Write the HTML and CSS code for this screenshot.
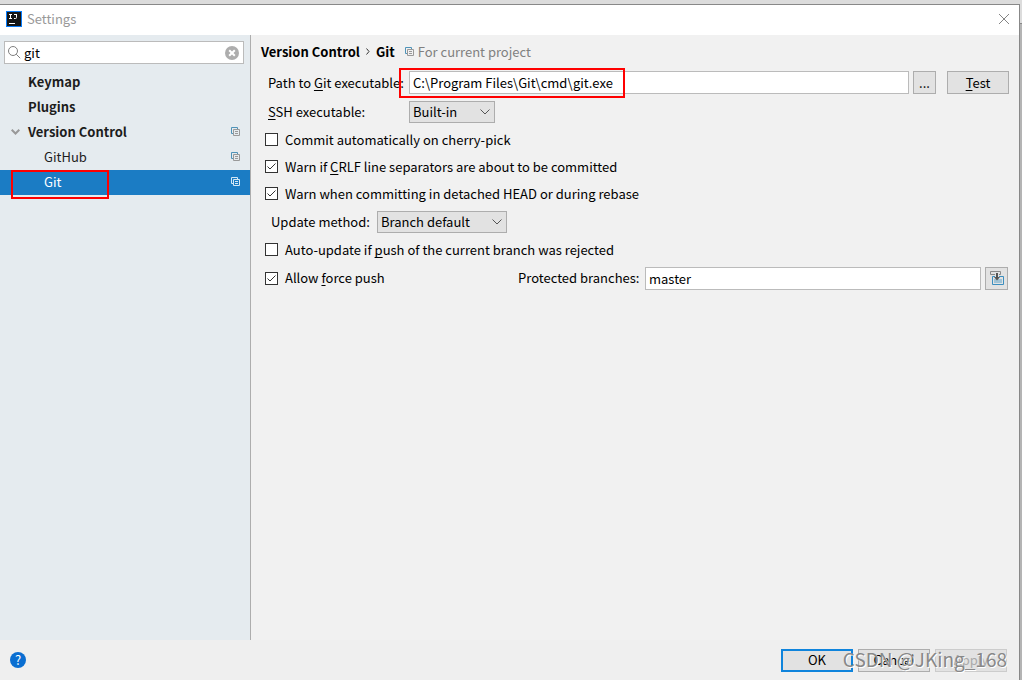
FILE: index.html
```
<!DOCTYPE html>
<html lang="en">
    <head>
        <meta charset="utf-8">
        <title>Settings</title>
        <link rel="stylesheet" href="styles.css">
    </head>
    <body>
        <svg class="defs" width="0" height="0">
            <symbol id="project" viewBox="0 0 9 9">
                <path class="back" d="M2 6.5H.5v-6h6V2"/>
                <path class="front" d="M2.5 2.5h6v6h-6zM4 4.5h3M4 6.5h3"/>
            </symbol>
        </svg>
        <div class="window">
            <header class="titleBar">
                <svg class="logo" width="16" height="16" viewBox="0 0 16 16">
                    <path fill="#087cfa" d="M0 0h16v16H0z"/>
                    <path fill="#151515" d="M1 1h14v14H1z"/>
                    <path fill="none" stroke="#fff" d="M3 3.5h3M4.5 3v5M3 7.5h3M8 3.5h3M10.5 3v3.5q0 1-1 1H8"/>
                    <path fill="#fff" d="M3 12h6v1H3z"/>
                </svg>
                <span class="title">Settings</span>
                <button class="close" aria-label="Close">
                    <svg width="12" height="12" viewBox="0 0 12 12"><path fill="none" stroke="#858585" d="M1 1l10 10M11 1L1 11"/></svg>
                </button>
            </header>

            <div class="main">
                <aside class="sidebar">
                    <div class="search">
                        <svg width="13" height="13" viewBox="0 0 13 13"><path fill="none" stroke="#7f7f7f" d="M9.5 5a4.5 4.5 0 1 1-9 0a4.5 4.5 0 1 1 9 0M8.2 8.2l4 4"/></svg>
                        <input type="text" value="git" aria-label="Search settings">
                        <button class="clear" aria-label="Clear">
                            <svg width="14" height="14" viewBox="0 0 14 14"><circle cx="7" cy="7" r="7" fill="#adadad"/><path stroke="#fff" stroke-width="2" d="M4.2 4.2l5.6 5.6M9.8 4.2L4.2 9.8"/></svg>
                        </button>
                    </div>
                    <nav class="tree">
                        <a class="item group" href="#">Keymap</a>
                        <a class="item group" href="#">Plugins</a>
                        <a class="item group" href="#">
                            <svg class="arrow" width="9" height="6" viewBox="0 0 9 6"><path fill="none" stroke="#999" stroke-width="2" d="M.7.7l3.8 3.8L8.3.7"/></svg>
                            Version Control
                            <svg class="project" width="9" height="9"><use href="#project"/></svg>
                        </a>
                        <a class="item child" href="#">GitHub<svg class="project" width="9" height="9"><use href="#project"/></svg></a>
                        <a class="item child selected" href="#">Git<svg class="project" width="9" height="9"><use href="#project"/></svg><span class="mark markTree"></span></a>
                    </nav>
                </aside>

                <form class="content">
                    <h1 class="path">
                        Version Control
                        <svg width="4" height="7" viewBox="0 0 4 7"><path fill="none" stroke="#333" d="M.5.5l2.5 3l-2.5 3"/></svg>
                        Git
                        <small><svg class="project" width="9" height="9"><use href="#project"/></svg>For current project</small>
                    </h1>
                    <div class="row">
                        <label class="name" for="git">Path to <u>G</u>it executable:</label>
                        <div class="field">
                            <input class="text" type="text" id="git" value="C:\Program Files\Git\cmd\git.exe">
                            <span class="mark markPath"></span>
                        </div>
                        <button class="button small" type="button">...</button>
                        <button class="button test" type="button"><span><u>T</u>est</span></button>
                    </div>
                    <div class="row">
                        <label class="name" for="ssh"><u>S</u>SH executable:</label>
                        <select id="ssh" class="ssh"><option>Built-in</option></select>
                    </div>
                    <div class="row check">
                        <input type="checkbox" id="cherry">
                        <label for="cherry">Commit automatically on cherry-pick</label>
                    </div>
                    <div class="row check">
                        <input type="checkbox" id="crlf" checked>
                        <label for="crlf">Warn if <u>C</u>RLF line separators are about to be committed</label>
                    </div>
                    <div class="row check">
                        <input type="checkbox" id="head" checked>
                        <label for="head">Warn when committing in detached HEAD or during rebase</label>
                    </div>
                    <div class="row update">
                        <label class="methodName" for="method">Update method:</label>
                        <select id="method" class="method"><option>Branch default</option></select>
                    </div>
                    <div class="row check">
                        <input type="checkbox" id="auto">
                        <label for="auto">Auto-update if <u>p</u>ush of the current branch was rejected</label>
                    </div>
                    <div class="row check tall">
                        <input type="checkbox" id="force" checked>
                        <label class="force" for="force">Allow <u>f</u>orce push</label>
                        <label class="branches" for="branches">Protected branches:</label>
                        <div class="field"><input class="text" type="text" id="branches" value="master"></div>
                        <button class="button small" type="button" aria-label="Expand">
                            <svg width="14" height="14" viewBox="0 0 14 14">
                                <path fill="#9fc3d6" d="M4 8h8v4H4z"/>
                                <path fill="none" stroke="#3b8ebf" d="M5 5.5H2.5v8h11v-8H9"/>
                                <path fill="none" stroke="#8a8a8a" d="M5 3.500H.5v-3h10v3H9"/>
                                <path fill="#555" d="M6 2h2v4h2L7 9.500L4 6h2z"/>
                            </svg>
                        </button>
                    </div>
                </form>
            </div>

            <footer class="footer">
                <button class="help" aria-label="Help">?</button>
                <button class="button ok">OK</button>
                <button class="button">Cancel</button>
                <button class="button" disabled><span><u>A</u>pply</span></button>
                <span class="watermark">CSDN @JKing_168</span>
            </footer>
        </div>
    </body>
</html>
```
FILE: styles.css
```
* {
    box-sizing: border-box;
}
body {
    margin: 0;
    height: 100vh;
    padding: 4px 2px 0 0;
    background: linear-gradient(#dcdcdc 23px, #888 23px, #888 24px, #b4b4b4 24px);
    font-family: "Noto Sans CJK SC", sans-serif;
    font-size: 13px;
    line-height: 18px;
    color: #000;
}
input, button, select {
    font: inherit;
    color: inherit;
    margin: 0;
}
button {
    padding: 0;
    border: 0;
    background: none;
}
svg {
    display: block;
    flex: none;
}
label {
    white-space: nowrap;
}
u {
    text-underline-offset: 2px;
    text-decoration-thickness: 1px;
    text-decoration-skip-ink: none;
}
.defs {
    position: absolute;
}
.window {
    display: flex;
    flex-direction: column;
    height: 100%;
    border: 1px solid #888;
    border-width: 1px 1px 0 0;
    background-color: #f1f1f1;
}
.titleBar {
    display: flex;
    align-items: center;
    height: 30px;
    padding: 0 9px 2px 6px;
    background-color: #fff;
    color: #999;
}
.title {
    flex: 1;
    margin-left: 5px;
}
.main {
    display: flex;
    flex: 1;
    min-height: 0;
}

/* left tree */
.sidebar {
    width: 251px;
    flex: none;
    padding-top: 6px;
    border-right: 1px solid #adadad;
    background-color: #e5ebef;
}
.search {
    display: flex;
    align-items: center;
    height: 23px;
    margin: 0 6px 6px 4px;
    padding: 0 4px 0 3px;
    border: 1px solid #bbb;
    background-color: #fff;
}
.search input {
    flex: 1;
    min-width: 0;
    height: 21px;
    padding: 0 3px;
    border: 0;
    outline: 0;
    background: none;
}
.item {
    position: relative;
    display: flex;
    align-items: center;
    height: 25px;
    padding: 0 10px 2px 28px;
    color: #1d1d1d;
    text-decoration: none;
}
.group {
    font-weight: bold;
}
.child {
    padding-left: 44px;
}
.arrow {
    margin: 0 8px 0 -17px;
}
.project {
    --back: #4f93b8;
    --front: #999;
    fill: none;
}
.item .project {
    margin-left: auto;
}
.back {
    stroke: var(--back);
}
.front {
    stroke: var(--front);
}
.selected {
    background-color: #1b7cc4;
    color: #fff;
}
.selected .project {
    --back: #d5e8f5;
    --front: #d5e8f5;
}
.mark {
    position: absolute;
    border: 2px solid #f00;
    pointer-events: none;
}
.markTree {
    left: 11px;
    top: 0;
    width: 98px;
    height: 29px;
    z-index: 1;
}
.markPath {
    left: -10px;
    top: -3px;
    width: 226px;
    height: 30px;
}

/* right page */
.content {
    flex: 1;
    min-width: 0;
    padding-right: 11px;
}
.path {
    display: flex;
    align-items: center;
    gap: 6px;
    height: 33px;
    margin: 0;
    padding: 0 0 0 10px;
    font-size: 13px;
}
.path small {
    display: flex;
    align-items: center;
    gap: 4px;
    margin-left: 4px;
    font-size: 13px;
    font-weight: normal;
    color: #808080;
}
.row {
    display: flex;
    align-items: center;
    height: 29px;
    padding-left: 17px;
}
.name {
    width: 141px;
    flex: none;
}
.field {
    position: relative;
    flex: 1;
    margin-right: 4px;
}
.text {
    display: block;
    width: 100%;
    height: 23px;
    padding: 0 3px;
    border: 1px solid #bbb;
    background-color: #fff;
}
.button {
    display: flex;
    align-items: center;
    justify-content: center;
    width: 72px;
    height: 23px;
    border: 1px solid #adadad;
    background-color: #e2e2e2;
}
.small {
    width: 23px;
    flex: none;
}
.test {
    width: 62px;
    margin-left: 11px;
}
.content .test {
    margin-right: -1px;
}
select {
    appearance: none;
    height: 22px;
    padding: 0 3px;
    border: 1px solid #adadad;
    background: #e2e2e2 url("data:image/svg+xml,%3Csvg xmlns='http://www.w3.org/2000/svg' width='10' height='6'%3E%3Cpath d='M.5.5L5 5L9.500.5' fill='none' stroke='%23555'/%3E%3C/svg%3E") no-repeat right 4px center;
}
.ssh {
    width: 86px;
}
.methodName {
    width: 106px;
}
.method {
    width: 130px;
}
.check {
    height: 27px;
    padding-left: 14px;
}
.tall {
    height: 30px;
}
.update {
    padding-left: 20px;
}
input[type="checkbox"] {
    appearance: none;
    flex: none;
    width: 13px;
    height: 13px;
    margin-right: 7px;
    border: 1px solid #333;
    background: #fff no-repeat center;
}
input[type="checkbox"]:checked {
    background-image: url("data:image/svg+xml,%3Csvg xmlns='http://www.w3.org/2000/svg' width='11' height='11'%3E%3Cpath d='M1.500 5.500L4 8L9.500 2.500' fill='none' stroke='%23333'/%3E%3C/svg%3E");
}
.force {
    width: 233px;
}
.branches {
    width: 127px;
}

/* bottom buttons */
.footer {
    position: relative;
    display: flex;
    align-items: center;
    gap: 5px;
    height: 40px;
    padding: 0 12px 0 10px;
    background-color: #efefef;
}
.help {
    width: 16px;
    height: 16px;
    margin-right: auto;
    border-radius: 50%;
    background-color: #0a6ed1;
    color: #fff;
    line-height: 16px;
}
.ok {
    border: 2px solid #0f84dc;
}
.button:disabled {
    border-color: #ccc;
    color: #aaa;
}
.watermark {
    position: absolute;
    right: 12px;
    top: 7px;
    font-size: 19px;
    line-height: 24px;
    color: #888;
    text-shadow: 1px 1px #fff;
    pointer-events: none;
}
```
